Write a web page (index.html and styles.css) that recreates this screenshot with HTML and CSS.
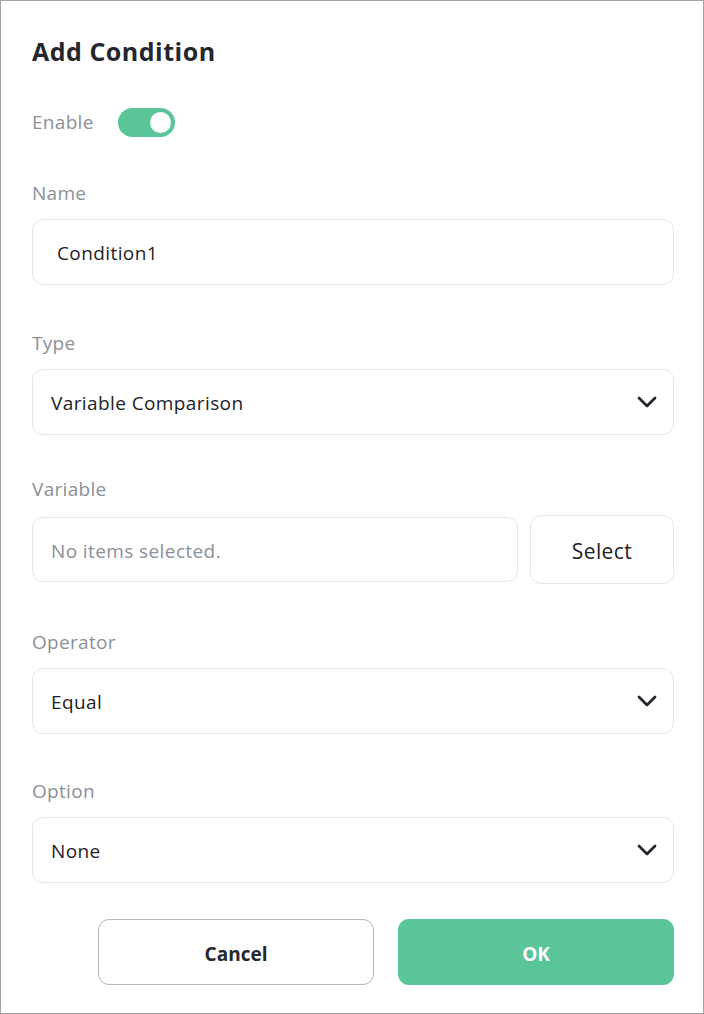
FILE: index.html
```html
<!DOCTYPE html>
<html>
<head>
<meta charset="utf-8">
<link rel="stylesheet" href="styles.css">
</head>
<body>
<div class="dialog">
  <h1 class="title">Add Condition</h1>
  <div class="enable-row">
    <span class="label enable-label">Enable</span>
    <span class="toggle"><span class="knob"></span></span>
  </div>
  <div class="field f-name">
    <div class="label">Name</div>
    <div class="input name-input">Condition1</div>
  </div>
  <div class="field f-type">
    <div class="label">Type</div>
    <div class="input select"><span>Variable Comparison</span>
      <svg class="chev" width="20" height="12" viewBox="0 0 20 12"><path d="M2 2 L10 10 L18 2" fill="none" stroke="#23262c" stroke-width="2.8" stroke-linecap="round" stroke-linejoin="round"/></svg>
    </div>
  </div>
  <div class="field f-var">
    <div class="label">Variable</div>
    <div class="var-row">
      <div class="input placeholder">No items selected.</div>
      <div class="select-btn">Select</div>
    </div>
  </div>
  <div class="field f-op">
    <div class="label">Operator</div>
    <div class="input select"><span>Equal</span>
      <svg class="chev" width="20" height="12" viewBox="0 0 20 12"><path d="M2 2 L10 10 L18 2" fill="none" stroke="#23262c" stroke-width="2.8" stroke-linecap="round" stroke-linejoin="round"/></svg>
    </div>
  </div>
  <div class="field f-opt">
    <div class="label">Option</div>
    <div class="input select"><span>None</span>
      <svg class="chev" width="20" height="12" viewBox="0 0 20 12"><path d="M2 2 L10 10 L18 2" fill="none" stroke="#23262c" stroke-width="2.8" stroke-linecap="round" stroke-linejoin="round"/></svg>
    </div>
  </div>
  <div class="buttons">
    <div class="btn cancel">Cancel</div>
    <div class="btn ok">OK</div>
  </div>
</div>
</body>
</html>
```
FILE: styles.css
```css
* { box-sizing: border-box; }
html, body { margin: 0; padding: 0; }
body {
  width: 704px;
  height: 1014px;
  font-family: "Open Sans", "Noto Sans CJK KR", sans-serif;
  background: #fff;
  color: #1f2126;
}
.dialog {
  width: 704px;
  height: 1014px;
  border: 1px solid #a3a3a3;
  padding: 33px 29px 0 31px;
}
.title {
  margin: 0;
  font-size: 25px;
  font-weight: 700;
  letter-spacing: 0.5px;
  line-height: 34px;
  color: #24272d;
}
.enable-row {
  display: flex;
  align-items: center;
  margin-top: 39px;
  height: 30px;
}
.enable-label { width: 86px; }
.label {
  font-size: 19px;
  letter-spacing: 0.3px;
  line-height: 24px;
  color: #8b9099;
}
.toggle {
  width: 57px;
  height: 29px;
  border-radius: 15px;
  background: #5bc59a;
  display: flex;
  align-items: center;
  justify-content: flex-end;
  padding-right: 4px;
}
.knob {
  width: 21px;
  height: 21px;
  border-radius: 50%;
  background: #fff;
}
.field .label { margin-bottom: 14px; }
.f-name { margin-top: 44px; }
.f-type { margin-top: 46px; }
.f-var { margin-top: 42px; }
.f-op { margin-top: 46px; }
.f-opt { margin-top: 45px; }
.input {
  height: 66px;
  border: 1px solid #e6e7ea;
  border-radius: 11px;
  display: flex;
  align-items: center;
  padding: 2px 18px 0;
  font-size: 19px;
  letter-spacing: 0.4px;
  color: #1f2126;
}
.name-input { padding-left: 24px; }
.select { justify-content: space-between; padding-right: 16px; }
.chev { display: block; margin-top: -2px; }
.var-row {
  display: flex;
  align-items: center;
  gap: 12px;
}
.var-row .input { flex: 1; height: 65px; }
.placeholder { color: #8b9099; }
.select-btn {
  width: 144px;
  height: 69px;
  border: 1px solid #e6e7ea;
  border-radius: 11px;
  display: flex;
  align-items: center;
  justify-content: center;
  padding-top: 2px;
  font-size: 21px;
  letter-spacing: 0.4px;
  color: #1f2126;
}
.buttons {
  display: flex;
  justify-content: flex-end;
  gap: 24px;
  margin-top: 36px;
}
.btn {
  width: 276px;
  height: 66px;
  border-radius: 11px;
  display: flex;
  align-items: center;
  justify-content: center;
  padding-top: 3px;
  font-size: 19px;
  font-weight: 700;
}
.cancel {
  border: 1px solid #b5b8be;
  color: #24272d;
}
.ok {
  background: #5bc59a;
  color: #fff;
}
```
